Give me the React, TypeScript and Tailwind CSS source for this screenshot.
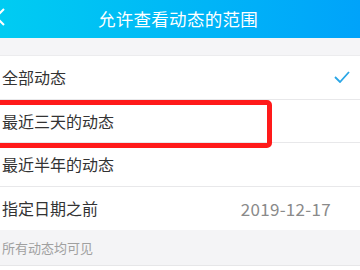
import React from "react";

const font = { fontFamily: '"Noto Sans CJK SC", "Noto Sans", sans-serif' };

function Row({ label, right, last }: { label: string; right?: React.ReactNode; last?: boolean }) {
  return (
    <div className={`h-[43.5px] flex items-center justify-between pl-[2px] pr-[10px] ${last ? "" : "border-b border-[#e8e8ea]"}`}>
      <span className="text-[16px] text-[#333333] leading-none">{label}</span>
      {right}
    </div>
  );
}

export default function App() {
  return (
    <div className="w-[360px] h-[270px] overflow-hidden bg-white relative" style={font}>
      <div className="h-[38px] bg-gradient-to-r from-[#00ccf2] to-[#00a3fa] flex items-center justify-center relative">
        <svg className="absolute left-[-6px] top-[8px]" width="12" height="18" viewBox="0 0 12 18">
          <path d="M10 1 L2 9 L10 17" fill="none" stroke="white" strokeWidth="2" />
        </svg>
        <span className="text-white text-[17.5px] tracking-[0.3px] leading-none pr-[4px]">允许查看动态的范围</span>
      </div>
      <div className="h-[18px] bg-[#f5f5f7] border-b border-[#ececee]" />
      <Row
        label="全部动态"
        right={
          <svg width="16" height="12" viewBox="0 0 16 12">
            <path d="M1 6 L6 11 L15 1" fill="none" stroke="#2aa6e6" strokeWidth="1.8" />
          </svg>
        }
      />
      <Row label="最近三天的动态" />
      <Row label="最近半年的动态" />
      <Row
        label="指定日期之前"
        last
        right={<span className="text-[17px] text-[#8a8a8a] leading-none mr-[19px] tracking-[0.3px]">2019-12-17</span>}
      />
      <div className="h-[36px] bg-[#f4f4f6] border-b border-[#e6e6e8] flex items-center pl-[2px]">
        <span className="text-[13px] text-[#a0a0a0] leading-none">所有动态均可见</span>
      </div>
      <div className="absolute left-[-6px] top-[100px] w-[278px] h-[48px] border-[5px] border-[#ff1a1a] rounded-[5px]" />
    </div>
  );
}
